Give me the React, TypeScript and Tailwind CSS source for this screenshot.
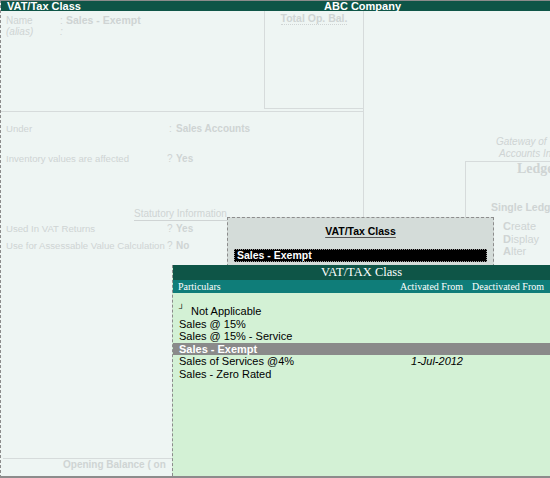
import React from "react";

const faded = "text-[#cfd4d4]";

const FormRow = ({ label, mark, value }: { label: string; mark: string; value: string }) => (
	<div className="flex leading-[13px] whitespace-nowrap">
		<span className="w-[161px] text-[9.6px]">{label}</span>
		<span className={mark === ":" ? "w-[9px] pl-[2px]" : "w-[9px]"}>{mark}</span>
		<span className="font-bold">{value}</span>
	</div>
);

const items = [
	{ name: "Not Applicable", mark: true },
	{ name: "Sales @ 15%" },
	{ name: "Sales @ 15% - Service" },
	{ name: "Sales - Exempt", selected: true },
	{ name: "Sales of Services @4%", from: "1-Jul-2012" },
	{ name: "Sales - Zero Rated" },
];

const App: React.FC = () => {
	return (
		<div className="w-[550px] h-[478px] relative overflow-hidden bg-[#eef5f3] border-l border-t border-b-2 border-[#8c8c8c] [border-left-style:dashed] flex flex-col font-['Liberation_Sans',Arial,sans-serif]">
			{/* title bar */}
			<div className="h-[10px] shrink-0 bg-[#0e5547] flex text-white font-bold text-[11px] leading-[10px] whitespace-nowrap">
				<span className="w-[323px] pl-[6px]">VAT/Tax Class</span>
				<span>ABC Company</span>
			</div>

			<div className="flex flex-1 min-h-0">
				{/* faded ledger form */}
				<div className={`w-[362px] flex flex-col text-[10px] ${faded}`}>
					<div className="flex h-[98px] shrink-0">
						<div className="w-[263px] pl-[5px] pt-[4px] leading-[11px]">
							<div className="flex">
								<span className="w-[54px]">Name</span>
								<span className="w-[6px]">:</span>
								<span className="font-bold text-[10.5px]">Sales - Exempt</span>
							</div>
							<div className="flex italic">
								<span className="w-[54px]">(alias)</span>
								<span>:</span>
							</div>
						</div>
						<div className="w-[99px] border-l border-b border-[#d6dbdb] text-center">
							<span className="inline-block font-bold text-[10.5px] leading-[12px] border-b border-dotted border-[#cfd4d4]">
								Total Op. Bal.
							</span>
						</div>
					</div>
					<div className="mt-[2px] border-t border-[#d6dbdb]" />

					<div className="pl-[5px]">
						<div className="mt-[10px]">
							<FormRow label="Under" mark=":" value="Sales Accounts" />
						</div>
						<div className="mt-[17px]">
							<FormRow label="Inventory values are affected" mark="?" value="Yes" />
						</div>
						<div className="mt-[41px] ml-[128px]">
							<span className="inline-block leading-[12px] border-b border-[#cfd4d4]">Statutory Information</span>
						</div>
						<div className="mt-[1px]">
							<FormRow label="Used In VAT Returns" mark="?" value="Yes" />
						</div>
						<div className="mt-[4px]">
							<FormRow label="Use for Assessable Value Calculation" mark="?" value="No" />
						</div>
					</div>

					<div className="flex-1" />
					<div className="ml-[2px] border-t border-[#d6dbdb]" />
					<div className="ml-[62px] pb-[5px] leading-[12px] font-bold whitespace-nowrap">Opening Balance ( on</div>
				</div>

				{/* faded gateway panel */}
				<div className={`flex-1 border-l border-[#d6dbdb] overflow-hidden flex flex-col whitespace-nowrap ${faded}`}>
					<div className="mt-[125px] pl-[132px] italic text-[10px] leading-[12px]">Gateway of Tally</div>
					<div className="pl-[135px] italic text-[10px] leading-[12px]">Accounts Info.</div>
					<div className="mt-[1px] ml-[101px] flex-1 border-t border-l border-[#d6dbdb] flex flex-col">
						<div className="pl-[51px] font-['Liberation_Serif',serif] font-bold text-[14px] leading-[14px]">Ledgers</div>
						<div className="mt-[25px] pl-[25px] font-bold text-[10.5px] leading-[12px]">Single Ledger</div>
						<div className="mt-[7px] pl-[37px] text-[11px] leading-[12.5px]">
							<div><b>C</b>reate</div>
							<div><b>D</b>isplay</div>
							<div><b>A</b>lter</div>
						</div>
					</div>
				</div>
			</div>

			{/* selection prompt */}
			<div className="absolute left-[226px] top-[216px] w-[267px] h-[50px] bg-[#d4dcd9] border border-dashed border-[#8c8c8c] flex flex-col">
				<div className="pt-[7px] text-center text-black font-bold text-[10.5px] leading-[12px]">
					<span className="underline decoration-[#555] underline-offset-2">VAT/Tax Class</span>
				</div>
				<div className="mt-[12px] mx-[6px] h-[13px] bg-black border border-dotted border-[#9a9a9a] text-white font-bold text-[10.5px] leading-[11px] pl-[2px]">
					Sales - Exempt
				</div>
			</div>

			{/* list of VAT classes */}
			<div className="absolute left-[171px] top-[264px] right-0 bottom-0 bg-[#d3f1d5] border-l border-dashed border-[#8c8c8c] flex flex-col">
				<div className="h-[15px] bg-[#0e5547] text-white text-center font-['Liberation_Serif',serif] text-[12.5px] leading-[15px]">
					VAT/TAX Class
				</div>
				<div className="h-[13px] bg-[#0f7d79] text-white flex font-['Liberation_Serif',serif] text-[10px] leading-[13px] pr-[6px] whitespace-nowrap">
					<span className="flex-1 pl-[5px]">Particulars</span>
					<span className="w-[72px] text-right">Activated From</span>
					<span className="w-[72px] ml-[9px] text-right">Deactivated From</span>
				</div>
				<div className="pt-[12px] text-[11px] leading-[12.6px] text-black">
					{items.map((it) => (
						<div
							key={it.name}
							className={`flex pr-[6px] whitespace-nowrap ${it.selected ? "bg-[#8a8a8a] text-white font-bold" : ""}`}
						>
							<span className="flex-1 pl-[6px]">
								{it.mark && <span className="inline-block w-[12px] text-[8px] align-top leading-[8px]">┘</span>}
								{it.name}
							</span>
							<span className="w-[72px] text-right italic">{it.from}</span>
							<span className="w-[72px] ml-[9px]" />
						</div>
					))}
				</div>
			</div>
		</div>
	);
};

export default App;
